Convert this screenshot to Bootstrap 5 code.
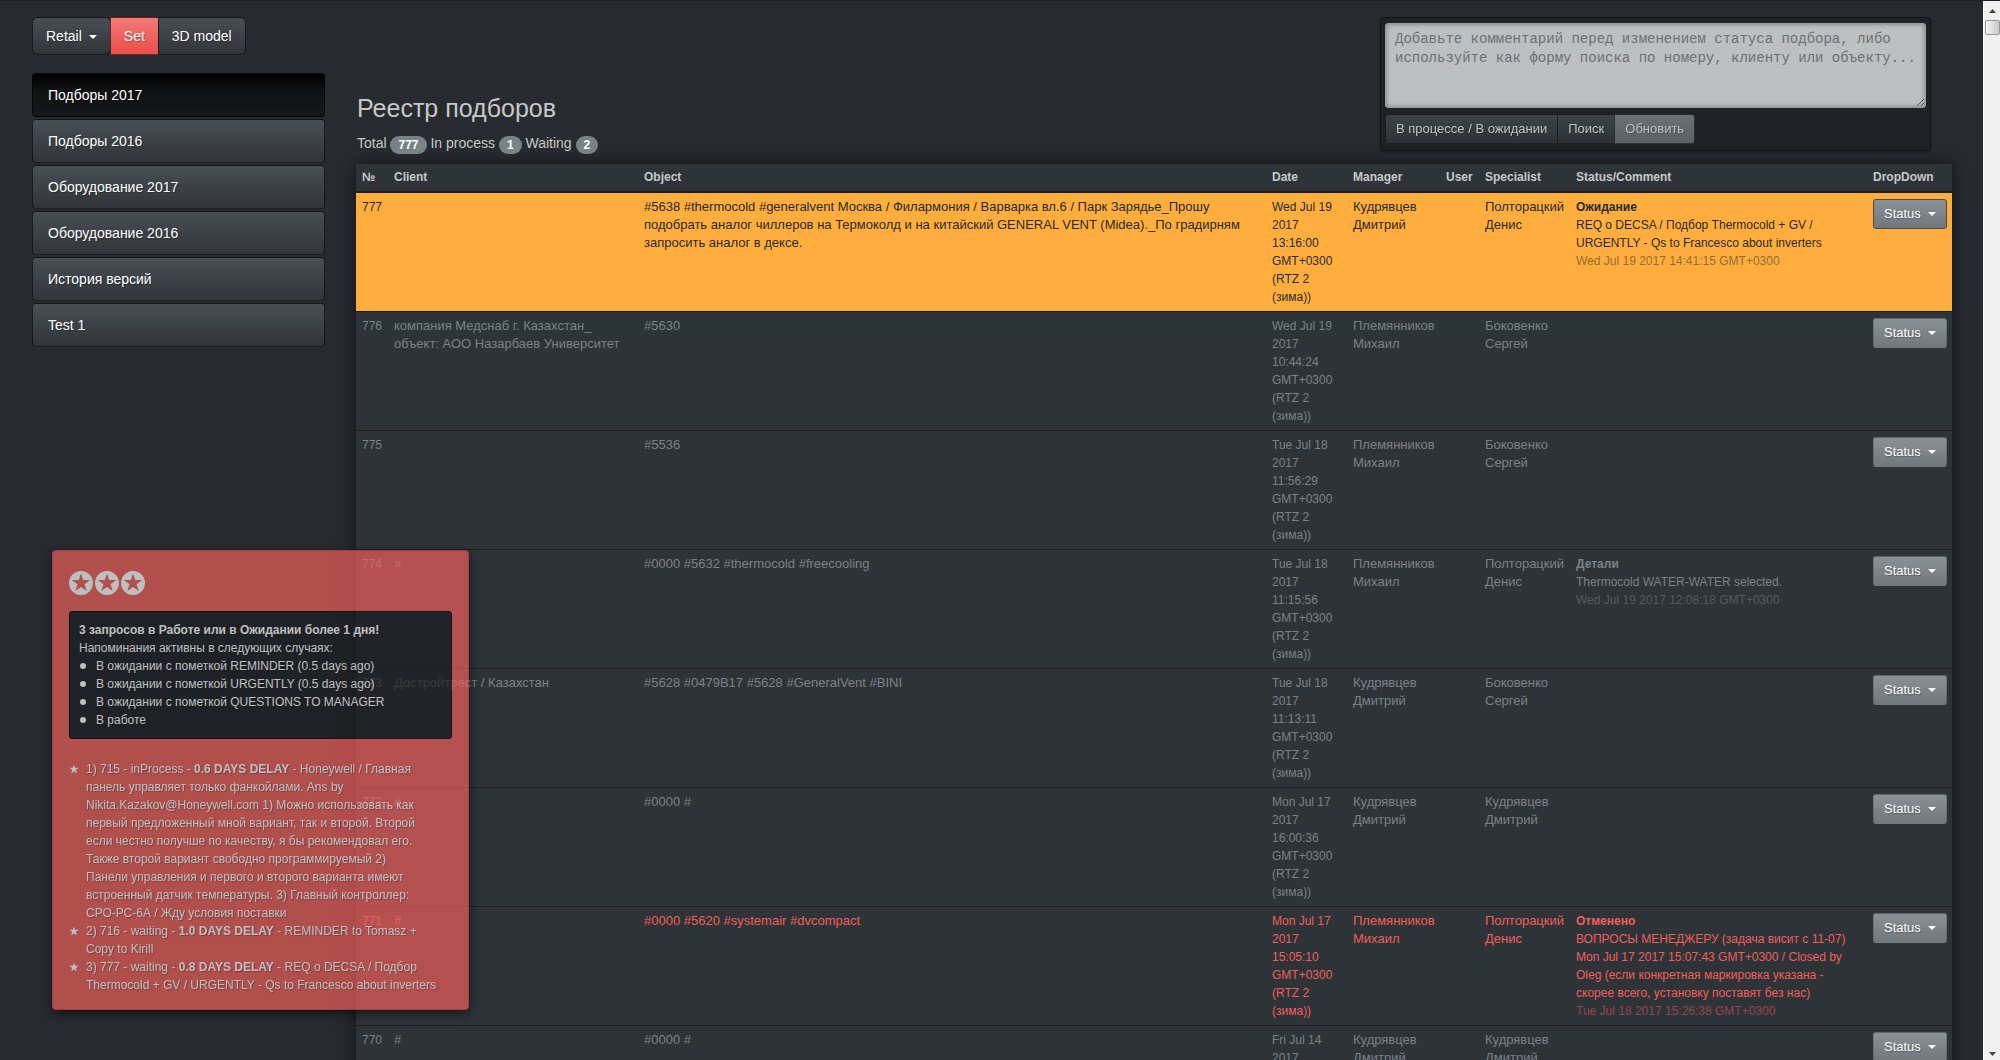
<!DOCTYPE html>
<html lang="ru">
<head>
<meta charset="utf-8">
<meta name="viewport" content="width=device-width, initial-scale=1">
<title>Реестр подборов</title>
<link href="https://cdn.jsdelivr.net/npm/bootstrap@5.3.0/dist/css/bootstrap.min.css" rel="stylesheet">
<style>
  body { font: 14px/20px "Liberation Sans", Arial, sans-serif; background: #272b30; color: #c8c8c8; border-top: 1px solid #1d1f2b; }
  .btn { --bs-btn-font-size: 14px; --bs-btn-line-height: 20px; --bs-btn-padding-x: 13px; --bs-btn-padding-y: 8px; --bs-btn-color: #fff; --bs-btn-hover-color: #fff; border: 1px solid rgba(0,0,0,.6); text-shadow: 1px 1px 1px rgba(0,0,0,.3); color: #fff; }
  .btn-sm { --bs-btn-font-size: 13px; --bs-btn-line-height: 18px; --bs-btn-padding-x: 10px; --bs-btn-padding-y: 5px; --bs-btn-border-radius: 3px; }
  .dropdown-toggle::after { margin-left: 7px; border-width: 4px 4px 0; vertical-align: 2px; }
  .tone-dark { background-image: linear-gradient(#484e55, #3a3f44 60%, #313539); }
  .tone-red { background-image: linear-gradient(#f17a77, #ee5f5b 60%, #ec4d49); }
  .tone-grey { background-image: linear-gradient(#8a9196, #7a8288 60%, #70787d); }
  .shell { padding: 16px 31px 0 32px; }
  .side { width: 293px; }
  .side .nav { gap: 2px; margin-top: 18px; }
  .side .nav-link { padding: 11px 15px; border: 1px solid rgba(0,0,0,.6); border-radius: 4px; color: #fff; text-shadow: 1px 1px 1px rgba(0,0,0,.3); }
  .side .nav-link.active { background: linear-gradient(#000, #101112 40%, #17181b); }
  .registry { padding-left: 31px; }
  .titles h1 { font-size: 25px; line-height: 30px; margin: 0 0 10px; }
  .titles { padding: 0 0 10px 1px; }
  .counts .badge { font-size: 12px; line-height: 12px; padding: 3px 8px; background: #7a8288; vertical-align: -1px; }
  .search-box { width: 551px; margin-right: 21px; margin-bottom: 13px; height: 134px; padding: 5px 4px; background: #1c1e22; border: 1px solid rgba(0,0,0,.6); border-radius: 4px; opacity: .7; box-shadow: 0 1px 3px rgba(0,0,0,.4); }
  .search-box textarea { display: block; width: 100%; height: 85px; padding: 6px 4px 6px 9px; border: 1px solid #ccc; border-radius: 3px; background: #fff; font: 14px/19px "Liberation Mono", "Courier New", monospace; margin-bottom: 6px; box-shadow: inset 0 0 5px rgba(0,0,0,.4); }
  .search-box textarea::placeholder { color: #8a9095; }
  .log-wrap { box-shadow: 0 0 14px rgba(0,0,0,.6); }
  .log { table-layout: fixed; width: 100%; background: #2e3338; color: #7a8288; font-size: 12px; line-height: 18px; }
  .log th { padding: 4px 5px 5px 6px; color: #c8c8c8; border-bottom: 2px solid #1c1e22; }
  .log td { padding: 5px 4px 5px 6px; vertical-align: top; border-bottom: 1px solid #1c1e22; }
  .log td:nth-child(2), .log td:nth-child(3), .log td:nth-child(5), .log td:nth-child(7) { font-size: 13px; }
  .log .waiting td { background: #ffae3d; color: #272b30; }
  .log .cancelled td { color: #ee5f5b; }
  .log .stamp { opacity: .5; }
  .log .btn { border-color: rgba(0,0,0,.15); margin-top: 1px; }
  .log .waiting .btn { border-color: #4b4a47; }
  .reminder { left: 52px; bottom: 50px; width: 417px; padding: 20px 16px 15px 16px; border: 1px solid #e0445a; border-radius: 4px; background: #ee5f5b; color: #fff; opacity: .7; font-size: 12px; line-height: 18px; box-shadow: 0 4px 12px rgba(0,0,0,.8); text-shadow: 1px 1px 1px rgba(0,0,0,.3); }
  .reminder .stars { gap: 2px; }
  .reminder .panel-note { margin: 16px 0 21px; padding: 9px 9px; background: #1c1e22; border: 1px solid #0b0c0e; border-radius: 3px; }
  .reminder li { position: relative; padding-left: 17px; white-space: nowrap; }
  .reminder .dots li::before { content: ""; position: absolute; left: 1px; top: 6px; width: 6px; height: 6px; border-radius: 50%; background: #fff; }
  .reminder li svg { position: absolute; left: 0; top: 4px; }
  .scroll { top: 1px; right: 0; width: 17px; height: calc(100vh - 1px); background: #f0f0f0; border-left: 1px solid #fff; padding: 8px 0 4px; }
  .scroll .grip { width: 15px; height: 15px; margin-top: 7px; border: 1px solid #979797; border-radius: 2px; background: linear-gradient(90deg, #f5f5f5, #c9c9cb); }
</style>
<script src="https://cdn.jsdelivr.net/npm/bootstrap@5.3.0/dist/js/bootstrap.bundle.min.js"></script>
</head>
<body class="vh-100 overflow-hidden">
<svg class="d-none">
  <symbol id="star" viewBox="0 0 24 24"><path d="M12 1l2.700 8.200h8.600l-7 5.100 2.700 8.200-7-5.100-7 5.100 2.700-8.200-7-5.100h8.600z"/></symbol>
  <symbol id="star-disc" viewBox="0 0 24 24"><path fill-rule="evenodd" d="M12 0a12 12 0 1 0 0 24a12 12 0 1 0 0-24zM12 2.500l2.200 6.600h7l-5.700 4.200 2.200 6.700-5.700-4.100-5.700 4.100 2.200-6.700-5.700-4.200h7z"/></symbol>
</svg>
<div class="shell d-flex pe-5">
  <aside class="side flex-shrink-0">
    <div class="btn-group" role="group" aria-label="Раздел">
      <button type="button" class="btn tone-dark dropdown-toggle">Retail</button>
      <button type="button" class="btn tone-red">Set</button>
      <button type="button" class="btn tone-dark">3D model</button>
    </div>
    <nav class="nav flex-column">
      <a class="nav-link active" href="#">Подборы 2017</a>
      <a class="nav-link tone-dark" href="#">Подборы 2016</a>
      <a class="nav-link tone-dark" href="#">Оборудование 2017</a>
      <a class="nav-link tone-dark" href="#">Оборудование 2016</a>
      <a class="nav-link tone-dark" href="#">История версий</a>
      <a class="nav-link tone-dark" href="#">Test 1</a>
    </nav>
  </aside>
  <main class="registry flex-grow-1">
    <div class="d-flex justify-content-between align-items-end">
      <div class="titles">
        <h1 class="fw-normal">Реестр подборов</h1>
        <div class="counts">Total <span class="badge rounded-pill">777</span> In process <span class="badge rounded-pill">1</span> Waiting <span class="badge rounded-pill">2</span></div>
      </div>
      <form class="search-box">
        <textarea aria-label="Комментарий" placeholder="Добавьте комментарий перед изменением статуса подбора, либо используйте как форму поиска по номеру, клиенту или объекту..."></textarea>
        <div class="btn-group">
          <button type="button" class="btn btn-sm tone-dark">В процессе / В ожидании</button>
          <button type="button" class="btn btn-sm tone-dark">Поиск</button>
          <button type="button" class="btn btn-sm tone-grey">Обновить</button>
        </div>
      </form>
    </div>
    <div class="log-wrap">
    <table class="log">
      <colgroup><col width="32"><col width="250"><col><col width="81"><col width="93"><col width="39"><col width="91"><col width="297"><col width="85"></colgroup>
      <thead><tr><th>№</th><th>Client</th><th>Object</th><th>Date</th><th>Manager</th><th>User</th><th>Specialist</th><th>Status/Comment</th><th>DropDown</th></tr></thead>
      <tbody>
        <tr class="waiting"><td>777</td><td></td><td>#5638 #thermocold #generalvent Москва / Филармония / Варварка вл.6 / Парк Зарядье_Прошу<br>подобрать аналог чиллеров на Термоколд и на китайский GENERAL VENT (Midea)._По градирням<br>запросить аналог в дексе.</td><td>Wed Jul 19 2017 13:16:00 GMT+0300 (RTZ 2 (зима))</td><td>Кудрявцев Дмитрий</td><td></td><td>Полторацкий Денис</td><td><b>Ожидание</b><br>REQ o DECSA / Подбор Thermocold + GV /<br>URGENTLY - Qs to Francesco about inverters<br><span class="stamp">Wed Jul 19 2017 14:41:15 GMT+0300</span></td><td><button type="button" class="btn btn-sm tone-grey dropdown-toggle">Status</button></td></tr>
        <tr><td>776</td><td>компания Медснаб г. Казахстан_<br>объект: АОО Назарбаев Университет</td><td>#5630</td><td>Wed Jul 19 2017 10:44:24 GMT+0300 (RTZ 2 (зима))</td><td>Племянников Михаил</td><td></td><td>Боковенко Сергей</td><td></td><td><button type="button" class="btn btn-sm tone-grey dropdown-toggle">Status</button></td></tr>
        <tr><td>775</td><td></td><td>#5536</td><td>Tue Jul 18 2017 11:56:29 GMT+0300 (RTZ 2 (зима))</td><td>Племянников Михаил</td><td></td><td>Боковенко Сергей</td><td></td><td><button type="button" class="btn btn-sm tone-grey dropdown-toggle">Status</button></td></tr>
        <tr><td>774</td><td>#</td><td>#0000 #5632 #thermocold #freecooling</td><td>Tue Jul 18 2017 11:15:56 GMT+0300 (RTZ 2 (зима))</td><td>Племянников Михаил</td><td></td><td>Полторацкий Денис</td><td><b>Детали</b><br>Thermocold WATER-WATER selected.<br><span class="stamp">Wed Jul 19 2017 12:08:18 GMT+0300</span></td><td><button type="button" class="btn btn-sm tone-grey dropdown-toggle">Status</button></td></tr>
        <tr><td>773</td><td>Достройтрест / Казахстан</td><td>#5628 #0479B17 #5628 #GeneralVent #BINI</td><td>Tue Jul 18 2017 11:13:11 GMT+0300 (RTZ 2 (зима))</td><td>Кудрявцев Дмитрий</td><td></td><td>Боковенко Сергей</td><td></td><td><button type="button" class="btn btn-sm tone-grey dropdown-toggle">Status</button></td></tr>
        <tr><td>772</td><td>#</td><td>#0000 #</td><td>Mon Jul 17 2017 16:00:36 GMT+0300 (RTZ 2 (зима))</td><td>Кудрявцев Дмитрий</td><td></td><td>Кудрявцев Дмитрий</td><td></td><td><button type="button" class="btn btn-sm tone-grey dropdown-toggle">Status</button></td></tr>
        <tr class="cancelled"><td>771</td><td>#</td><td>#0000 #5620 #systemair #dvcompact</td><td>Mon Jul 17 2017 15:05:10 GMT+0300 (RTZ 2 (зима))</td><td>Племянников Михаил</td><td></td><td>Полторацкий Денис</td><td><b>Отменено</b><br>ВОПРОСЫ МЕНЕДЖЕРУ (задача висит с 11-07)<br>Mon Jul 17 2017 15:07:43 GMT+0300 / Closed by<br>Oleg (если конкретная маркировка указана -<br>скорее всего, установку поставят без нас)<br><span class="stamp">Tue Jul 18 2017 15:26:38 GMT+0300</span></td><td><button type="button" class="btn btn-sm tone-grey dropdown-toggle">Status</button></td></tr>
        <tr><td>770</td><td>#</td><td>#0000 #</td><td>Fri Jul 14 2017</td><td>Кудрявцев Дмитрий</td><td></td><td>Кудрявцев Дмитрий</td><td></td><td><button type="button" class="btn btn-sm tone-grey dropdown-toggle">Status</button></td></tr>
      </tbody>
    </table>
    </div>
  </main>
</div>

<section class="reminder position-fixed">
  <div class="stars d-flex">
    <svg width="24" height="24" fill="#fff"><use href="#star-disc"/></svg>
    <svg width="24" height="24" fill="#fff"><use href="#star-disc"/></svg>
    <svg width="24" height="24" fill="#fff"><use href="#star-disc"/></svg>
  </div>
  <div class="panel-note">
    <b>3 запросов в Работе или в Ожидании более 1 дня!</b><br>
    Напоминания активны в следующих случаях:
    <ul class="list-unstyled mb-0 dots">
      <li>В ожидании с пометкой REMINDER (0.5 days ago)</li>
      <li>В ожидании с пометкой URGENTLY (0.5 days ago)</li>
      <li>В ожидании с пометкой QUESTIONS TO MANAGER</li>
      <li>В работе</li>
    </ul>
  </div>
  <ul class="list-unstyled mb-0">
    <li><svg width="10" height="10" fill="#fff"><use href="#star"/></svg>1) 715 - inProcess - <b>0.6 DAYS DELAY</b> - Honeywell / Главная<br>панель управляет только фанкойлами. Ans by<br>Nikita.Kazakov@Honeywell.com 1) Можно использовать как<br>первый предложенный мной вариант, так и второй. Второй<br>если честно получше по качеству, я бы рекомендовал его.<br>Также второй вариант свободно программируемый 2)<br>Панели управления и первого и второго варианта имеют<br>встроенный датчик температуры. 3) Главный контроллер:<br>СРО-РС-6А / Жду условия поставки</li>
    <li><svg width="10" height="10" fill="#fff"><use href="#star"/></svg>2) 716 - waiting - <b>1.0 DAYS DELAY</b> - REMINDER to Tomasz +<br>Copy to Kirill</li>
    <li><svg width="10" height="10" fill="#fff"><use href="#star"/></svg>3) 777 - waiting - <b>0.8 DAYS DELAY</b> - REQ o DECSA / Подбор<br>Thermocold + GV / URGENTLY - Qs to Francesco about inverters</li>
  </ul>
</section>

<div class="scroll position-fixed d-flex flex-column align-items-center" aria-hidden="true">
  <svg width="7" height="4"><path d="M3.500 0L7 4H0z" fill="#444"/></svg>
  <div class="grip"></div>
  <svg class="mt-auto" width="7" height="4"><path d="M0 0h7L3.500 4z" fill="#444"/></svg>
</div>
</body>
</html>
